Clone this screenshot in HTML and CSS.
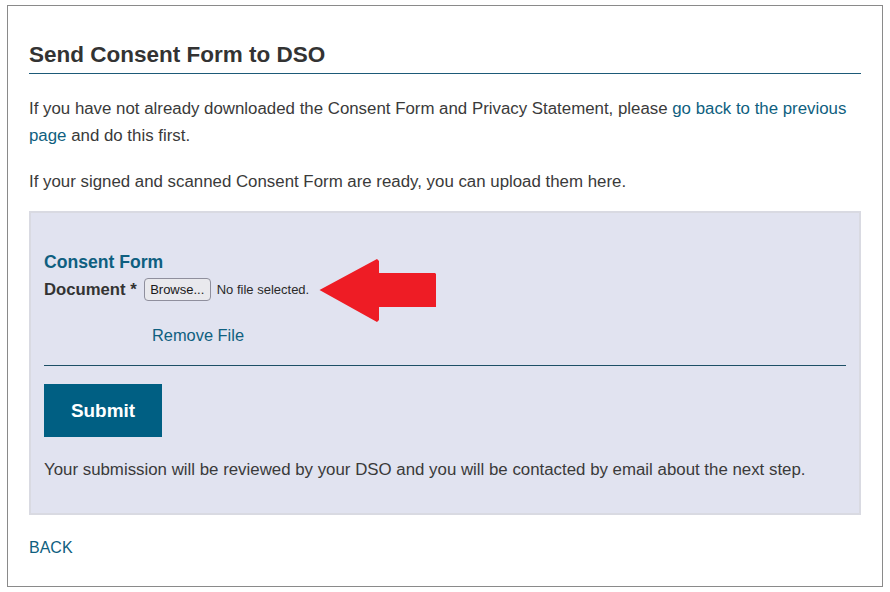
FILE: index.html
```html
<!DOCTYPE html>
<html lang="en">
<head>
<meta charset="utf-8">
<title>Send Consent Form to DSO</title>
<link rel="stylesheet" href="styles.css">
</head>
<body>
<div class="page">
  <h1 class="title">Send Consent Form to DSO</h1>
  <p class="intro">If you have not already downloaded the Consent Form and Privacy Statement, please <a class="link" href="#">go back to the previous page</a> and do this first.</p>
  <p class="intro second">If your signed and scanned Consent Form are ready, you can upload them here.</p>
  <div class="panel">
    <div class="section-title">Consent Form</div>
    <div class="file-row">
      <span class="field-label">Document *</span>
      <span class="browse">Browse...</span>
      <span class="file-status">No file selected.</span>
      <svg class="arrow" width="118" height="65" viewBox="0 0 118 65" aria-hidden="true">
        <path d="M0.5 32 L58 1 L60 3 L60 15 L116 15 L117 16 L117 49 L60 49 L60 62 L58 64 Z" fill="#ee1c25"/>
      </svg>
    </div>
    <a class="link remove" href="#">Remove File</a>
    <div class="rule"></div>
    <button class="submit" type="button">Submit</button>
    <p class="note">Your submission will be reviewed by your DSO and you will be contacted by email about the next step.</p>
  </div>
  <a class="link back" href="#">BACK</a>
</div>
</body>
</html>
```
FILE: styles.css
```css
html, body {
  margin: 0;
  padding: 0;
  background: #ffffff;
}
body {
  font-family: "Liberation Sans", Arial, sans-serif;
  color: #3a3a3a;
}
.page {
  margin: 5px 0 0 7px;
  width: 832px;
  border: 1px solid #8a8a8a;
  padding: 36px 21px 26px 21px;
}
.title {
  margin: 0;
  font-size: 22.5px;
  line-height: 26px;
  font-weight: bold;
  color: #333333;
  padding-bottom: 5px;
  border-bottom: 1px solid #1d5a78;
}
.intro {
  margin: 21px 0 0 0;
  font-size: 16.85px;
  line-height: 27px;
}
.intro.second {
  margin-top: 19px;
}
.link {
  color: #0f5f80;
  text-decoration: none;
}
.panel {
  margin-top: 16px;
  background: #e1e3f0;
  border: 2px solid #d9dae2;
  padding: 38px 13px 31px 13px;
}
.section-title {
  font-size: 17.6px;
  line-height: 22px;
  font-weight: bold;
  color: #0f5f80;
}
.file-row {
  position: relative;
  margin-top: 5px;
  height: 24px;
  display: flex;
  align-items: center;
  font-size: 16.7px;
  line-height: 24px;
}
.field-label {
  font-weight: bold;
  color: #333333;
  margin-right: 7px;
}
.browse {
  box-sizing: border-box;
  height: 23px;
  width: 67px;
  border: 1px solid #8f8f9d;
  border-radius: 4px;
  background: #e9e9ed;
  font-size: 13px;
  line-height: 21px;
  text-align: center;
  color: #1a1a1a;
  margin-top: -1px;
}
.file-status {
  font-size: 13px;
  margin-left: 6px;
  color: #2a2a2a;
}
.arrow {
  position: absolute;
  left: 275px;
  top: -20px;
}
.remove {
  display: block;
  margin: 21px 0 0 108px;
  font-size: 16.4px;
  line-height: 24px;
}
.rule {
  margin-top: 18px;
  height: 1px;
  background: #1d4f66;
}
.submit {
  display: block;
  margin-top: 18px;
  width: 118px;
  height: 53px;
  border: none;
  background: #005f83;
  color: #ffffff;
  font-family: "Liberation Sans", Arial, sans-serif;
  font-size: 18.9px;
  font-weight: bold;
  padding: 0;
}
.note {
  margin: 21px 0 0 0;
  font-size: 16.85px;
  line-height: 24px;
}
.back {
  display: block;
  margin-top: 21px;
  font-size: 16px;
  line-height: 24px;
}
```
